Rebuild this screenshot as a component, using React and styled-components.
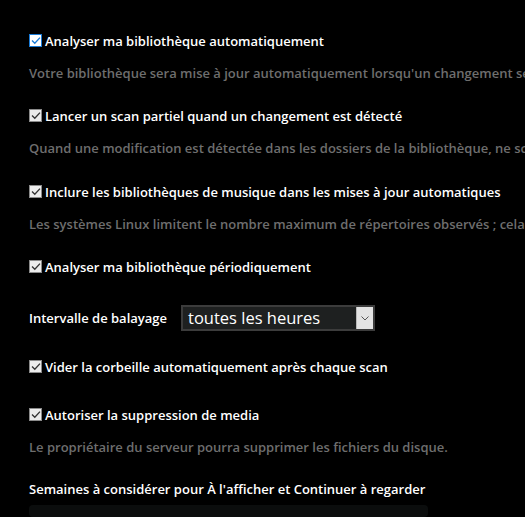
import styled, { createGlobalStyle } from 'styled-components'

const Global = createGlobalStyle`
    html, body {
        margin: 0;
        padding: 0;
        background: #000;
        overflow: hidden;
    }
    body {
        font-family: 'Open Sans', 'Liberation Sans', sans-serif;
        -webkit-font-smoothing: antialiased;
    }
`

const Page = styled.div`
    width: 525px;
    height: 517px;
    padding: 32px 0 0 29px;
    box-sizing: border-box;
    display: flex;
    flex-direction: column;
    overflow: hidden;
`

const Block = styled.div`
    display: flex;
    flex-direction: column;
    margin-bottom: ${props => props.$gap || 0}px;
`

const CheckRow = styled.label`
    display: flex;
    align-items: center;
    gap: 3px;
    height: 18px;
    font-size: 13px;
    font-weight: 600;
    color: #fff;
    white-space: nowrap;
`

const Box = styled.span`
    width: 11px;
    height: 11px;
    border: 1px solid ${props => (props.$focus ? '#1a7bd6' : '#8a8a8a')};
    background: ${props => (props.$focus ? '#fff' : '#ececec')};
    display: flex;
    align-items: center;
    justify-content: center;
    flex: none;
    margin-top: -1px;
`

const Desc = styled.div`
    margin-top: 14px;
    height: 18px;
    line-height: 18px;
    font-size: 13px;
    font-weight: 600;
    color: #6e6e6e;
    white-space: nowrap;
`

const SelectRow = styled.div`
    display: flex;
    align-items: center;
    gap: 14px;
    height: 26px;
    margin-bottom: 27px;
`

const Label = styled.div`
    font-size: 13px;
    font-weight: 600;
    color: #fff;
    white-space: nowrap;
`

const Select = styled.div`
    width: 194px;
    height: 26px;
    box-sizing: border-box;
    border: 2px solid #3c3c3c;
    background: #1e2020;
    display: flex;
    align-items: center;
    justify-content: space-between;
    padding-left: 5px;
`

const SelectText = styled.span`
    font-size: 16.5px;
    color: #fff;
    line-height: 22px;
`

const Arrow = styled.span`
    width: 16px;
    height: 22px;
    background: #e3e3e3;
    border-left: 1px solid #b8b8b8;
    display: flex;
    align-items: center;
    justify-content: center;
`

const Heading = styled.div`
    height: 18px;
    line-height: 18px;
    font-size: 13px;
    font-weight: 600;
    color: #fff;
    white-space: nowrap;
    margin-bottom: 7px;
`

const Input = styled.div`
    width: 399px;
    height: 40px;
    background: #0b0d0d;
    border-radius: 4px;
`

function Check({ focus }) {
    return (
        <Box $focus={focus}>
            <svg width="10" height="9" viewBox="0 0 10 9">
                <path
                    d="M1 4.5 L3.8 7.3 L9 1.6"
                    fill="none"
                    stroke={focus ? '#1a7bd6' : '#333'}
                    strokeWidth="1.3"
                />
            </svg>
        </Box>
    )
}

function Setting({ label, desc, focus, gap }) {
    return (
        <Block $gap={gap}>
            <CheckRow>
                <Check focus={focus} /> {label}
            </CheckRow>
            {desc && <Desc>{desc}</Desc>}
        </Block>
    )
}

export default function App() {
    return (
        <Page>
            <Global />
            <Setting
                focus
                label="Analyser ma bibliothèque automatiquement"
                desc="Votre bibliothèque sera mise à jour automatiquement lorsqu'un changement sera détecté."
                gap={25}
            />
            <Setting
                label="Lancer un scan partiel quand un changement est détecté"
                desc="Quand une modification est détectée dans les dossiers de la bibliothèque, ne scanner que ce dossier."
                gap={26}
            />
            <Setting
                label="Inclure les bibliothèques de musique dans les mises à jour automatiques"
                desc="Les systèmes Linux limitent le nombre maximum de répertoires observés ; cela peut entraîner des problèmes."
                gap={25}
            />
            <Setting label="Analyser ma bibliothèque périodiquement" gap={29} />
            <SelectRow>
                <Label>Intervalle de balayage</Label>
                <Select>
                    <SelectText>toutes les heures</SelectText>
                    <Arrow>
                        <svg width="8" height="5" viewBox="0 0 8 5">
                            <path d="M0.5 0.5 L4 4 L7.5 0.5" fill="none" stroke="#555" strokeWidth="1" />
                        </svg>
                    </Arrow>
                </Select>
            </SelectRow>
            <Setting label="Vider la corbeille automatiquement après chaque scan" gap={30} />
            <Setting
                label="Autoriser la suppression de media"
                desc="Le propriétaire du serveur pourra supprimer les fichiers du disque."
                gap={24}
            />
            <Heading>Semaines à considérer pour À l'afficher et Continuer à regarder</Heading>
            <Input />
        </Page>
    )
}
